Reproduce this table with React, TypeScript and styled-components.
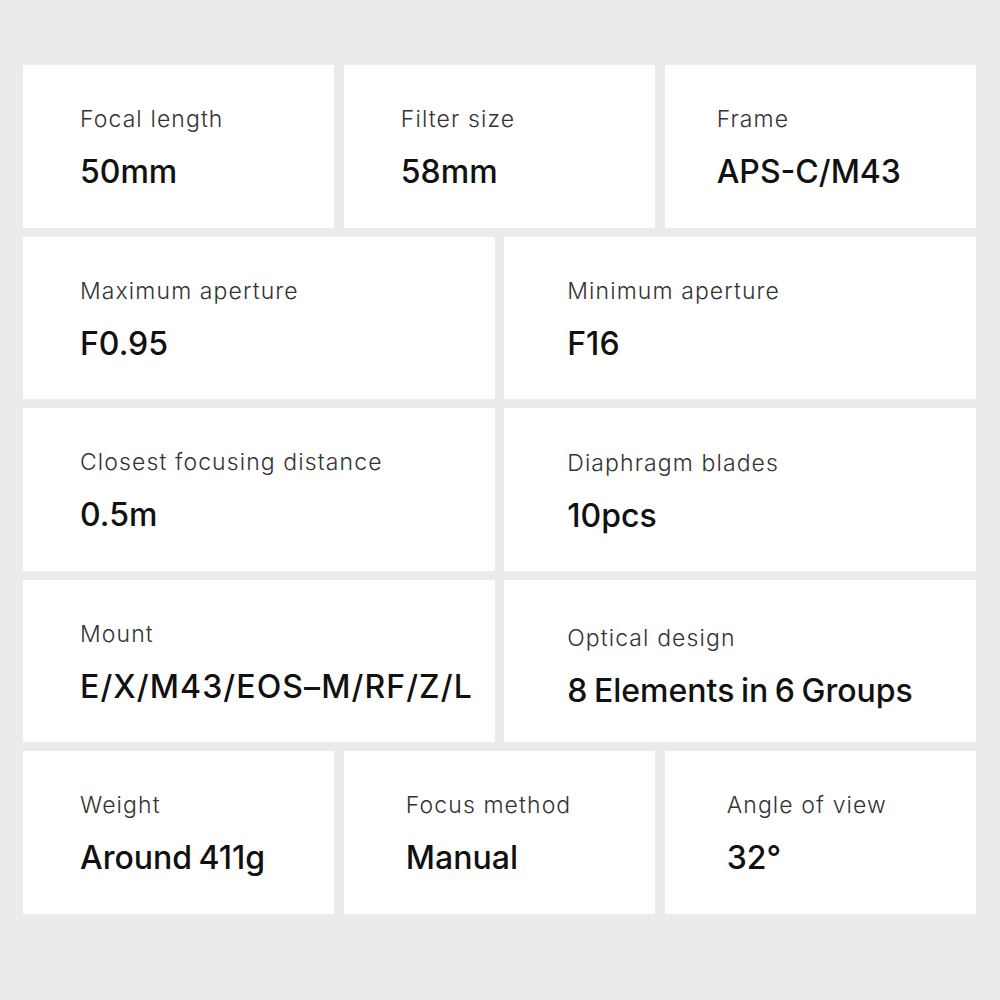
import React from "react";
import styled, { createGlobalStyle } from "styled-components";

const Global = createGlobalStyle`
  html, body {
    margin: 0;
    padding: 0;
    background: #ebebeb;
  }
  body {
    font-family: Inter, "Noto Sans", "Liberation Sans", sans-serif;
  }
`;

const Page = styled.div`
  width: 1000px;
  height: 1000px;
  box-sizing: border-box;
  padding: 65px 24px 0 23px;
  background: #ebebeb;
`;

const Grid = styled.div`
  display: grid;
  grid-template-columns: repeat(6, 1fr);
  grid-auto-rows: 162.5px;
  column-gap: 9.5px;
  row-gap: 9px;
`;

const Card = styled.div<{ $span: number; $pad: number; $shift?: number }>`
  grid-column: span ${(p) => p.$span};
  background: #ffffff;
  box-sizing: border-box;
  padding: ${(p) => 41 + (p.$shift ?? 0)}px 0 0 ${(p) => p.$pad}px;
  display: flex;
  flex-direction: column;
`;

const Label = styled.div`
  font-size: 23px;
  font-weight: 300;
  line-height: 26px;
  color: #333333;
  letter-spacing: 1.1px;
  white-space: nowrap;
`;

const Value = styled.div<{ $wide?: boolean }>`
  margin-top: 21px;
  font-size: 32px;
  font-weight: 500;
  line-height: 38px;
  color: #111111;
  letter-spacing: ${(p) => (p.$wide ? "1.1px" : "0")};
  word-spacing: -2px;
  white-space: nowrap;
`;

type Spec = { label: string; value: string; span: number; pad: number; shift?: number; wide?: boolean };

const specs: Spec[] = [
  { label: "Focal length", value: "50mm", span: 2, pad: 57 },
  { label: "Filter size", value: "58mm", span: 2, pad: 57 },
  { label: "Frame", value: "APS-C/M43", span: 2, pad: 52 },
  { label: "Maximum aperture", value: "F0.95", span: 3, pad: 57 },
  { label: "Minimum aperture", value: "F16", span: 3, pad: 63 },
  { label: "Closest focusing distance", value: "0.5m", span: 3, pad: 57 },
  { label: "Diaphragm blades", value: "10pcs", span: 3, pad: 63, shift: 1 },
  { label: "Mount", value: "E/X/M43/EOS–M/RF/Z/L", span: 3, pad: 57, wide: true },
  { label: "Optical design", value: "8 Elements in 6 Groups", span: 3, pad: 63, shift: 4 },
  { label: "Weight", value: "Around 411g", span: 2, pad: 57 },
  { label: "Focus method", value: "Manual", span: 2, pad: 62 },
  { label: "Angle of view", value: "32°", span: 2, pad: 62 },
];

export default function App() {
  return (
    <Page>
      <Global />
      <Grid>
        {specs.map((s) => (
          <Card key={s.label} $span={s.span} $pad={s.pad} $shift={s.shift}>
            <Label>{s.label}</Label>
            <Value $wide={s.wide}>{s.value}</Value>
          </Card>
        ))}
      </Grid>
    </Page>
  );
}
